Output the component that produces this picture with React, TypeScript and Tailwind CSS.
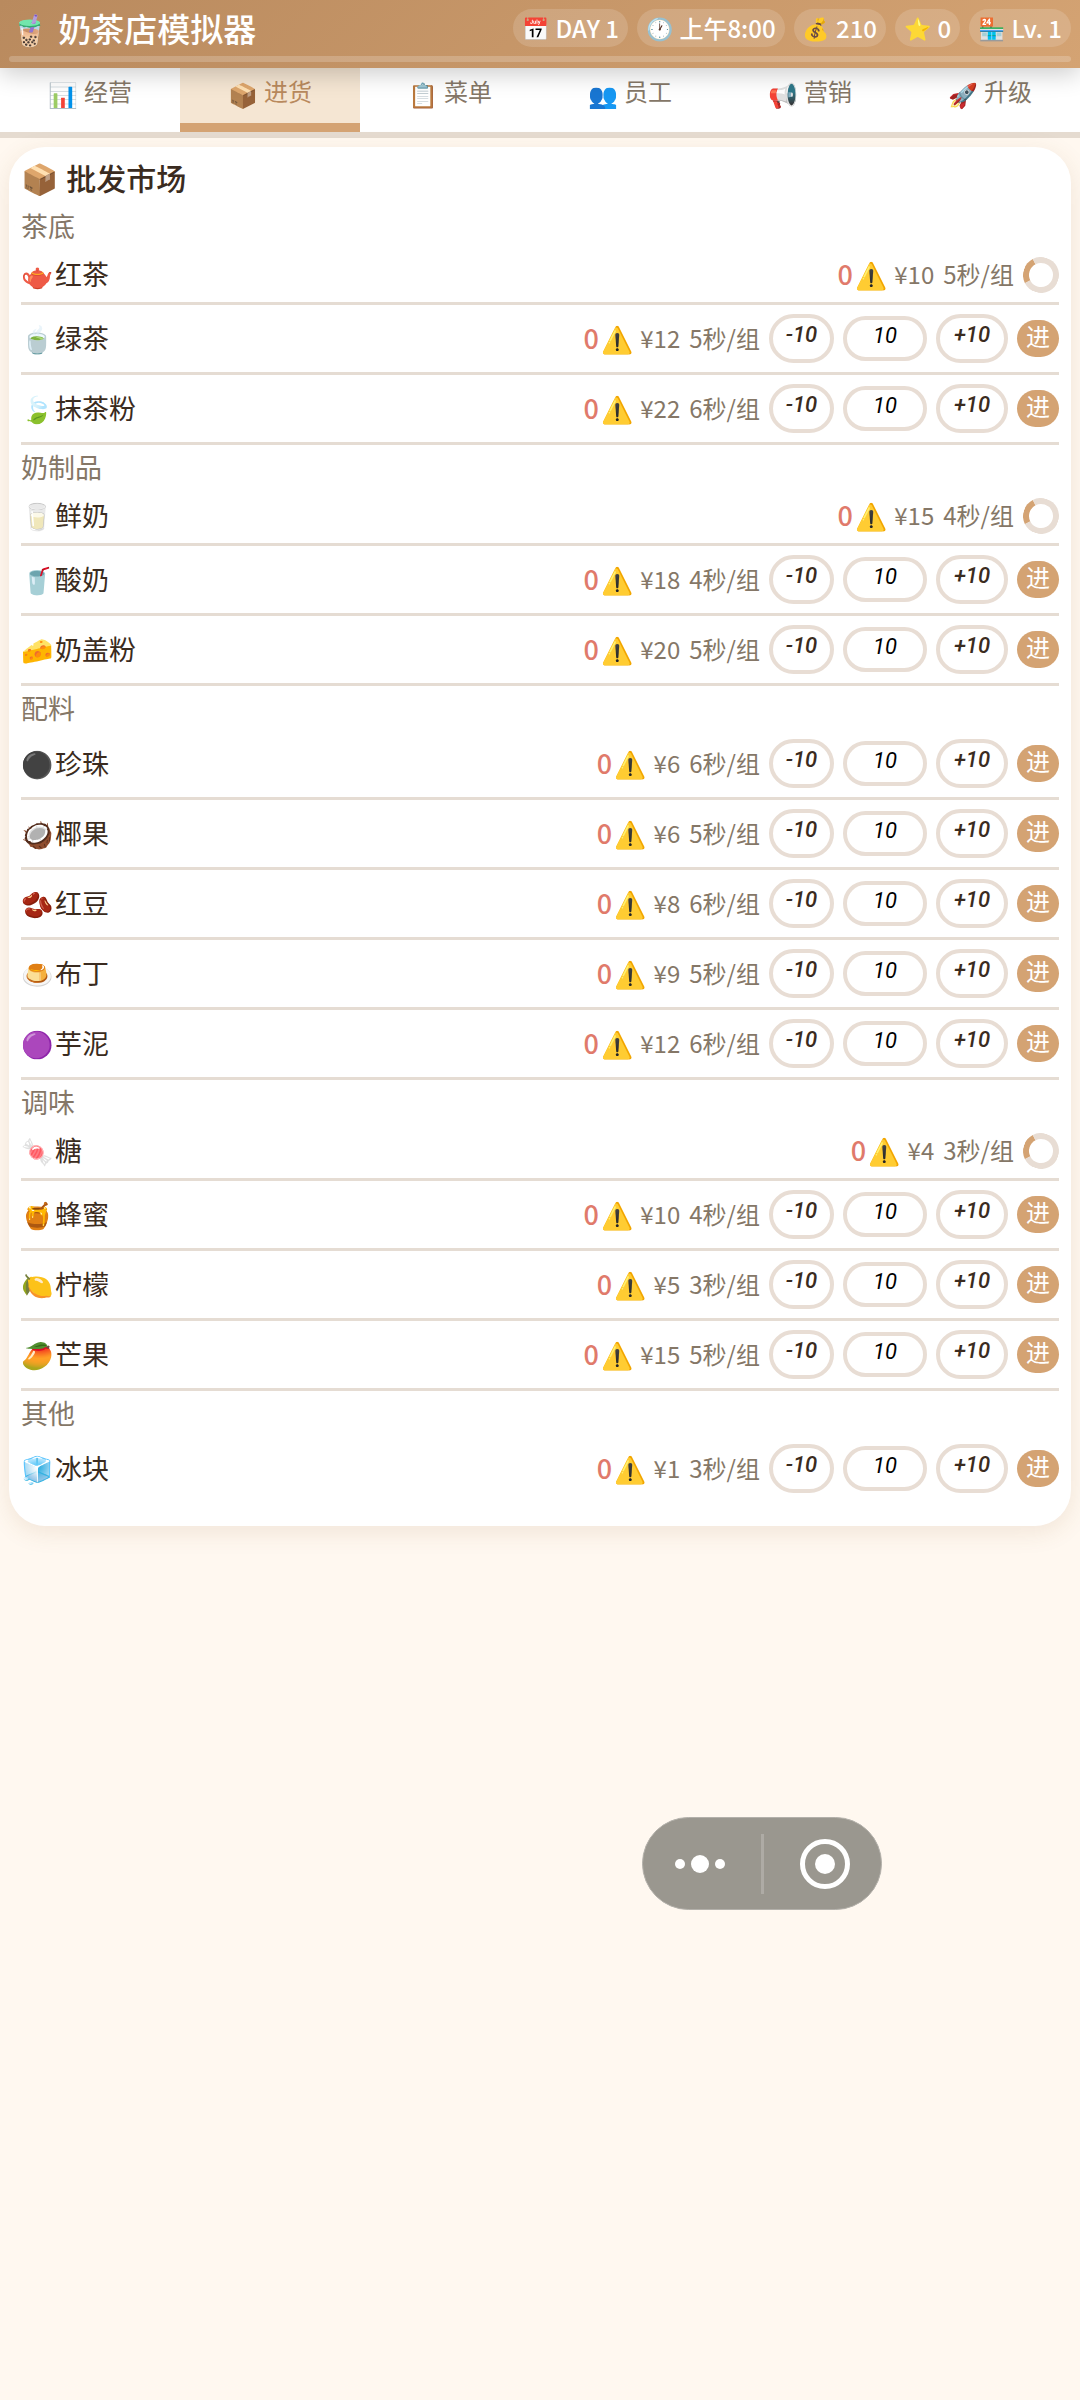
import { useState } from "react";
import clsx from "clsx";

interface Item {
  icon: string;
  name: string;
  price: number;
  seconds: number;
  loading?: boolean;
}

interface Category {
  title: string;
  items: Item[];
}

const STATS = [
  { icon: "📅", label: "DAY 1" },
  { icon: "🕐", label: "上午8:00" },
  { icon: "💰", label: "210" },
  { icon: "⭐", label: "0" },
  { icon: "🏪", label: "Lv. 1" },
];

const TABS = [
  { icon: "📊", label: "经营" },
  { icon: "📦", label: "进货" },
  { icon: "📋", label: "菜单" },
  { icon: "👥", label: "员工" },
  { icon: "📢", label: "营销" },
  { icon: "🚀", label: "升级" },
];

const CATEGORIES: Category[] = [
  {
    title: "茶底",
    items: [
      { icon: "🫖", name: "红茶", price: 10, seconds: 5, loading: true },
      { icon: "🍵", name: "绿茶", price: 12, seconds: 5 },
      { icon: "🍃", name: "抹茶粉", price: 22, seconds: 6 },
    ],
  },
  {
    title: "奶制品",
    items: [
      { icon: "🥛", name: "鲜奶", price: 15, seconds: 4, loading: true },
      { icon: "🥤", name: "酸奶", price: 18, seconds: 4 },
      { icon: "🧀", name: "奶盖粉", price: 20, seconds: 5 },
    ],
  },
  {
    title: "配料",
    items: [
      { icon: "⚫", name: "珍珠", price: 6, seconds: 6 },
      { icon: "🥥", name: "椰果", price: 6, seconds: 5 },
      { icon: "🫘", name: "红豆", price: 8, seconds: 6 },
      { icon: "🍮", name: "布丁", price: 9, seconds: 5 },
      { icon: "🟣", name: "芋泥", price: 12, seconds: 6 },
    ],
  },
  {
    title: "调味",
    items: [
      { icon: "🍬", name: "糖", price: 4, seconds: 3, loading: true },
      { icon: "🍯", name: "蜂蜜", price: 10, seconds: 4 },
      { icon: "🍋", name: "柠檬", price: 5, seconds: 3 },
      { icon: "🥭", name: "芒果", price: 15, seconds: 5 },
    ],
  },
  {
    title: "其他",
    items: [{ icon: "🧊", name: "冰块", price: 1, seconds: 3 }],
  },
];

export default function App() {
  const [tab, setTab] = useState("进货");

  return (
    <div className="min-h-screen bg-[#fff8f0] font-['Noto_Sans_CJK_SC','Noto_Color_Emoji',sans-serif] text-[#3a2b20]">
      <Header />

      <nav className="grid grid-cols-6 border-b-6 border-[#e5dbd0] bg-white">
        {TABS.map((t) => (
          <button
            key={t.label}
            onClick={() => setTab(t.label)}
            className={clsx(
              "flex h-16 items-center justify-center gap-1.5 border-b-9 pb-1 text-2xl",
              tab === t.label
                ? "border-[#d4a373] bg-[#f5e6d3] text-[#b98a5e]"
                : "border-transparent text-[#857767]"
            )}
          >
            <span>{t.icon}</span>
            <span className="pb-1.5">{t.label}</span>
          </button>
        ))}
      </nav>

      <main className="m-[9px] rounded-[36px] bg-white px-3 pt-3 pb-6 shadow-[0_6px_24px_rgba(139,90,43,0.12)]">
        <h2 className="mb-2 flex items-center gap-2 text-3xl/[37px] font-medium">
          <span>📦</span>
          批发市场
        </h2>
        {CATEGORIES.map((category) => (
          <section key={category.title} className="group">
            <h3 className="pt-0.5 pb-0.5 text-[27px]/[40px] text-[#857767]">{category.title}</h3>
            <ul>
              {category.items.map((item) => (
                <ItemRow key={item.name} item={item} />
              ))}
            </ul>
          </section>
        ))}
      </main>

      <FloatingCapsule />
    </div>
  );
}

function Header() {
  return (
    <header className="relative z-10 bg-linear-135 from-[#b98a5e] to-[#d4a373] px-[9px] pt-[9px] pb-1.5 text-white shadow-[0_6px_24px_rgba(0,0,0,0.2)]">
      <div className="flex h-[38px] items-center justify-between">
        <h1 className="flex items-center gap-2.5 pl-0.5 text-[33px]/[38px] font-medium">
          <span className="text-3xl/[38px]">🧋</span>
          奶茶店模拟器
        </h1>
        <div className="flex gap-[9px]">
          {STATS.map((s) => (
            <div
              key={s.icon}
              className="flex h-[38px] items-center gap-1.5 rounded-full bg-white/15 px-[9px] text-2xl font-medium whitespace-nowrap"
            >
              <span className="text-[22px]">{s.icon}</span>
              {s.label}
            </div>
          ))}
        </div>
      </div>
      <div className="mt-[9px] h-1.5 rounded-full bg-white/20" />
    </header>
  );
}

function ItemRow({ item }: { item: Item }) {
  const [qty, setQty] = useState(10);

  return (
    <li className="flex items-center justify-between border-b-3 border-[#e5dcd3] py-[9px] group-last:last:border-b-0">
      <div className="flex items-center pb-0.5 text-[27px]/[34px]">
        <span className="w-[34px] text-center text-[26px]">{item.icon}</span>
        {item.name}
      </div>
      <div className="flex items-center gap-[9px] text-2xl/[34px] text-[#857767]">
        <span className="flex items-center gap-0.5 pb-0.5 text-[27px]/[34px] font-medium text-[#e07a6b]">
          0<span className="text-[26px]">⚠️</span>
        </span>
        <span className="-ml-0.5 pb-0.5">¥{item.price}</span>
        <span className="pb-0.5">{item.seconds}秒/组</span>
        {item.loading ? (
          <div className="size-9 -rotate-72 rounded-full border-6 border-[#e8ddd4] border-t-[#d4a373]" />
        ) : (
          <>
            <StepButton className="w-[65px]" onClick={() => setQty(Math.max(0, qty - 10))}>
              -10
            </StepButton>
            <input
              aria-label={`${item.name}数量`}
              value={qty}
              onChange={(e) => setQty(Number(e.target.value) || 0)}
              className="h-[45px] w-[84px] rounded-full border-4 border-[#e8ddd4] bg-white pb-1.5 text-center font-['Roboto',sans-serif] text-[22px] text-black italic"
            />
            <StepButton className="w-[72px]" onClick={() => setQty(qty + 10)}>
              +10
            </StepButton>
            <button className="flex h-[37px] w-[42px] items-center justify-center rounded-full bg-[#d4a373] pb-1.5 text-2xl text-white">
              进
            </button>
          </>
        )}
      </div>
    </li>
  );
}

function StepButton({
  className,
  onClick,
  children,
}: {
  className: string;
  onClick: () => void;
  children: React.ReactNode;
}) {
  return (
    <button
      onClick={onClick}
      className={clsx(
        "h-[49px] rounded-full border-4 border-[#e8ddd4] bg-white pb-2 text-center font-['Roboto',sans-serif] text-[22px] font-medium text-[#3a2b20] italic",
        className
      )}
    >
      {children}
    </button>
  );
}

// Mini-program capsule that floats over the page
function FloatingCapsule() {
  return (
    <div className="fixed top-[1817px] right-[198px] flex h-[93px] w-60 items-center rounded-full border border-[#b3b0aa] bg-[#9a978f]">
      <button aria-label="更多" className="flex w-[118px] items-center justify-center gap-1.5 pr-1">
        <span className="size-2.5 rounded-full bg-white" />
        <span className="size-[18px] rounded-full bg-white" />
        <span className="size-2.5 rounded-full bg-white" />
      </button>
      <span className="h-[60px] w-[3px] bg-[#aeaba5]" />
      <button aria-label="关闭" className="flex flex-1 items-center justify-center pl-1">
        <span className="flex size-[50px] items-center justify-center rounded-full border-5 border-white">
          <span className="size-5 rounded-full bg-white" />
        </span>
      </button>
    </div>
  );
}
